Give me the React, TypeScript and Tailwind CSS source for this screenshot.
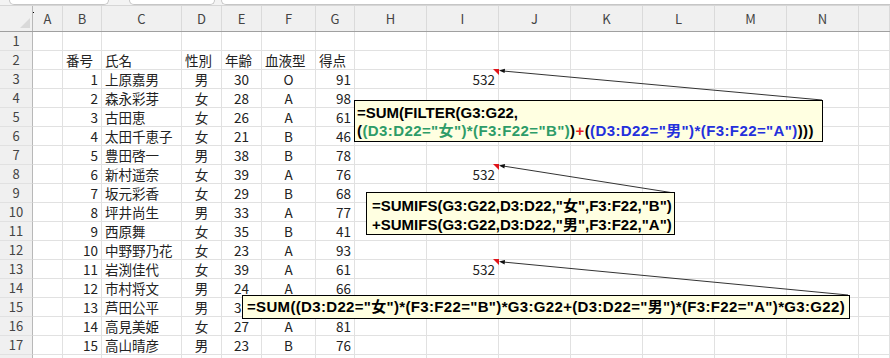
import React from 'react';

const cols = ['', 'A', 'B', 'C', 'D', 'E', 'F', 'G', 'H', 'I', 'J', 'K', 'L', 'M', 'N', ''];

type Person = [number, string, string, number, string, number];

const people: Person[] = [
  [1, '上原嘉男', '男', 30, 'O', 91],
  [2, '森永彩芽', '女', 28, 'A', 98],
  [3, '古田恵', '女', 26, 'A', 61],
  [4, '太田千恵子', '女', 21, 'B', 46],
  [5, '豊田啓一', '男', 38, 'B', 78],
  [6, '新村遥奈', '女', 39, 'A', 76],
  [7, '坂元彩香', '女', 29, 'B', 68],
  [8, '坪井尚生', '男', 33, 'A', 77],
  [9, '西原舞', '女', 35, 'B', 41],
  [10, '中野野乃花', '女', 23, 'A', 93],
  [11, '岩渕佳代', '女', 39, 'A', 61],
  [12, '市村将文', '男', 24, 'A', 66],
  [13, '芦田公平', '男', 31, 'A', 54],
  [14, '高見美姫', '女', 27, 'A', 81],
  [15, '高山晴彦', '男', 23, 'B', 76],
];

const gridCols =
  'grid grid-cols-[33px_30px_39px_80px_40px_40px_54px_39px_72px_72px_72px_72px_72px_72px_72px_1fr]';

const cell = 'h-[19px] border-r border-b border-[#e1e1e1] px-[3px] leading-[18px] whitespace-nowrap overflow-visible';

function Row({ n, label, children }: { n: number; label: boolean; children?: React.ReactNode[] }) {
  const values = children ?? [];
  return (
    <div className={gridCols}>
      <div className="h-[19px] border-r border-b border-r-[#b8b8b8] border-b-[#e1e1e1] bg-[#f0f0f0] text-center text-[13px] leading-[18px] text-[#444]">
        {label ? n : null}
      </div>
      {Array.from({ length: 15 }).map((_, i) => (
        <div key={i} className={cell}>
          {values[i] ?? null}
        </div>
      ))}
    </div>
  );
}

function Sum() {
  return <div className="text-right">532</div>;
}

export default function App() {
  const rows: { n: number; cells: React.ReactNode[] }[] = [];
  rows.push({ n: 1, cells: [] });
  rows.push({
    n: 2,
    cells: [null, <div>番号</div>, <div>氏名</div>, <div>性別</div>, <div>年齢</div>, <div>血液型</div>, <div>得点</div>],
  });
  people.forEach((p, i) => {
    const n = i + 3;
    rows.push({
      n,
      cells: [
        null,
        <div className="text-right">{p[0]}</div>,
        <div>{p[1]}</div>,
        <div className="text-center">{p[2]}</div>,
        <div className="text-center">{p[3]}</div>,
        <div className="text-center">{p[4]}</div>,
        <div className="text-right">{p[5]}</div>,
        null,
        n === 3 || n === 8 || n === 13 ? <Sum /> : null,
      ],
    });
  });
  rows.push({ n: 18, cells: [] });

  return (
    <div className="relative w-[890px] h-[358px] overflow-hidden bg-white text-[13.5px] text-[#222] font-['Noto_Sans_CJK_JP',sans-serif]">
      {/* toolbar remnants */}
      <div className="flex h-[6px] gap-[20px] border-b border-[#d6d6d6] bg-[#f3f3f3] pl-[9px]">
        <div className="h-[5px] w-[100px] rounded-b-[5px] border border-t-0 border-[#c6c6c6] bg-white" />
        <div className="h-[5px] w-[86px] rounded-b-[5px] border border-t-0 border-[#c6c6c6] bg-white" />
        <div className="-ml-[14px] h-[5px] flex-1 rounded-bl-[5px] border border-t-0 border-r-0 border-[#c6c6c6] bg-white" />
      </div>

      {/* column headers */}
      <div className={`${gridCols} h-[26px] border-b border-[#a0a0a0] bg-[#f0f0f0]`}>
        {cols.map((c, i) => (
          <div
            key={i}
            className={`relative flex items-center justify-center text-[13px] text-[#444] ${
              i === 0 ? 'border-r border-[#b8b8b8]' : 'border-r border-[#dadada]'
            }`}
          >
            {i === 0 && (
              <svg className="absolute left-0 top-0" width="33" height="25">
                <polygon points="30,12 30,22 20,22" fill="#d9d9d9" />
              </svg>
            )}
            {c}
          </div>
        ))}
      </div>

      {rows.map((r) => (
        <Row key={r.n} n={r.n} label={r.n < 18}>
          {r.cells}
        </Row>
      ))}

      {/* note indicators and arrows */}
      <svg className="pointer-events-none absolute left-0 top-0" width="890" height="358">
        <rect x="33" y="12" width="1" height="1" fill="#000" />
        {[69, 164, 259].map((y) => (
          <polygon key={y} points={`493,${y} 499,${y} 499,${y + 6}`} fill="#e0141a" />
        ))}
        <line x1="822" y1="100" x2="503" y2="71" stroke="#333" strokeWidth="1" />
        <line x1="674" y1="193" x2="503" y2="166" stroke="#333" strokeWidth="1" />
        <line x1="848" y1="295" x2="503" y2="262" stroke="#333" strokeWidth="1" />
        <polygon points="499,70.6 505,68.8 504.6,73" fill="#111" />
        <polygon points="499,165.4 505,164 504.4,168.4" fill="#111" />
        <polygon points="499,261.5 505,260 504.6,264.4" fill="#111" />
      </svg>

      {/* comment boxes */}
      <div className="absolute left-[354px] top-[100px] h-[42px] w-[469px] border border-black bg-[#ffffe1] pl-[2px] pt-[3px] text-[15px] font-bold leading-[18px] text-black font-['Liberation_Sans','Noto_Sans_CJK_JP',sans-serif] whitespace-nowrap">
        <div>=SUM(FILTER(G3:G22,</div>
        <div className="tracking-[0.4px]">
          (<span className="text-[#2e9c68]">(D3:D22="女")*(F3:F22="B")</span>)
          <span className="text-[#e81b1b]">+</span>(
          <span className="text-[#2430dc]">(D3:D22="男")*(F3:F22="A")</span>)))
        </div>
      </div>

      <div className="absolute left-[366px] top-[192px] h-[43px] w-[309px] border border-black bg-[#ffffe1] pl-[5px] pt-[3px] text-[15px] font-bold leading-[19px] text-black font-['Liberation_Sans','Noto_Sans_CJK_JP',sans-serif] whitespace-nowrap">
        <div>=SUMIFS(G3:G22,D3:D22,"女",F3:F22,"B")</div>
        <div>+SUMIFS(G3:G22,D3:D22,"男",F3:F22,"A")</div>
      </div>

      <div className="absolute left-[242px] top-[295px] h-[24px] w-[608px] border border-black bg-[#ffffe1] pl-[4px] pt-[2px] text-[15px] font-bold leading-[18px] tracking-[0.33px] text-black font-['Liberation_Sans','Noto_Sans_CJK_JP',sans-serif] whitespace-nowrap">
        =SUM((D3:D22="女")*(F3:F22="B")*G3:G22+(D3:D22="男")*(F3:F22="A")*G3:G22)
      </div>
    </div>
  );
}
